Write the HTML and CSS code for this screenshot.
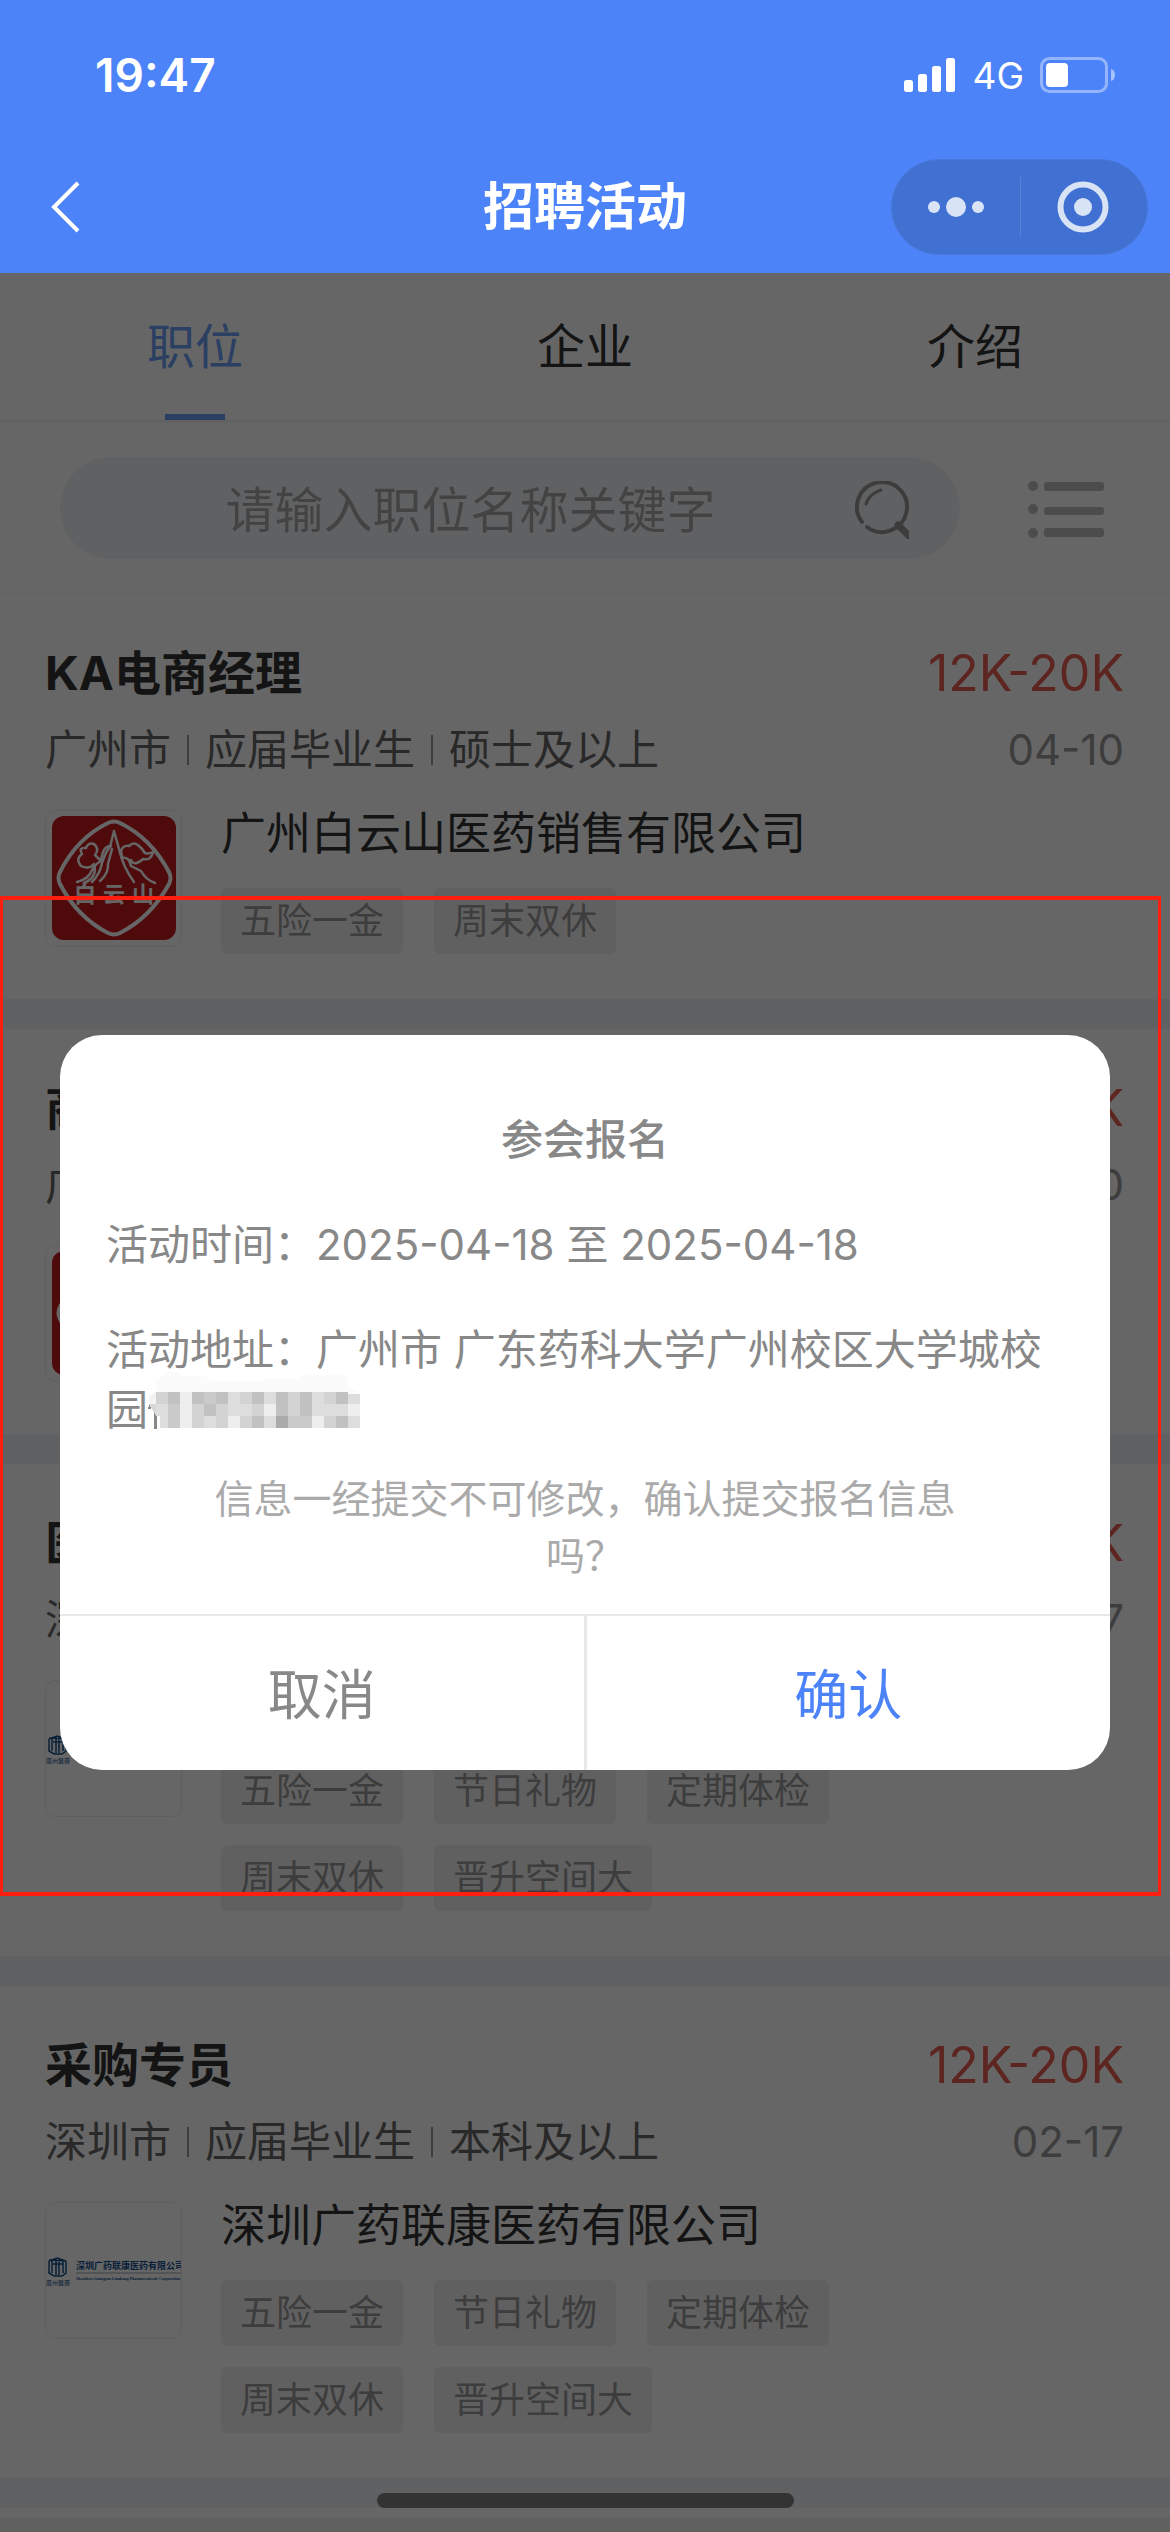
FILE: index.html
```
<!DOCTYPE html>
<html lang="zh-CN">
<head>
<meta charset="utf-8">
<meta name="viewport" content="width=device-width, initial-scale=1">
<title>招聘活动</title>
<link rel="stylesheet" href="styles.css">
</head>
<body>
<svg class="defs" width="0" height="0" aria-hidden="true">
  <symbol id="logo-bys" viewBox="0 0 135 135">
    <rect x="6" y="5" width="124" height="124" rx="12" fill="#c6191e"/>
    <g fill="none" stroke="#fff" stroke-linecap="round" stroke-linejoin="round">
      <path stroke-width="4" d="M62 12q6-3 12 0Q105 27 123 61q3 6 0 12-18 33-49 49-6 3-12 0Q31 106 14 73q-3-6 0-12Q31 27 62 12z"/>
      <path stroke-width="2.5" d="M46 71q8-8 10-19 4-12 8-16l4-16 5 18q4 18 15 33M76 47q7-2 9 8l10 5q5 9 14 12M54 70q9-8 8-17l4-15M31 71q12-3 15-12 5-8 10-9M38 72q14-6 10-19-5 6-13 2-6-7 1-12-4-7 4-6 2-6 8-4 6 5 1 11l6 6q2-16 10-15M76 46l-1-6q2-6 8-5 5-5 10 0l4 4q2 6 10 2-2 9-10 7-9 8-12 1"/>
    </g>
    <text x="39 68 97" y="91" text-anchor="middle" class="logo-bys-text">白云山</text>
  </symbol>
  <symbol id="logo-lk" viewBox="0 0 135 135">
    <g fill="none" stroke="#17508f" stroke-width="1.5">
      <path d="M3 58l8-3 9 3M3 58v12l5 3h8l4-3V58M6 58v12M17 58v12M7 61h10M10 55v17M13 55v17M3 57l17 1"/>
    </g>
    <text x="0" y="82" class="logo-lk-mark">廣州醫藥</text>
    <text x="30" y="66" class="logo-lk-name">深圳广药联康医药有限公司</text>
    <path d="M30 70h106" stroke="#9aa4b0" stroke-width="1"/>
    <text x="30" y="77" class="logo-lk-en">Shenzhen Guangyao Liankang Pharmaceuticals Corporation</text>
  </symbol>
</svg>

<header class="header">
  <div class="status">
    <span class="time">19:47</span>
    <div class="status-right">
      <svg width="52" height="34" viewBox="0 0 52 34" fill="#fff" aria-hidden="true"><rect y="22" width="9" height="12" rx="2.5"/><rect x="14" y="16" width="9" height="18" rx="2.5"/><rect x="28" y="8" width="9" height="26" rx="2.5"/><rect x="42" width="9" height="34" rx="2.5"/></svg>
      <span class="network">4G</span>
      <svg width="76" height="36" viewBox="0 0 76 36" aria-hidden="true"><rect x="1.500" y="1.500" width="65" height="33" rx="8" fill="none" stroke="#fff" stroke-opacity=".4" stroke-width="3"/><rect x="6" y="6" width="22" height="24" rx="4" fill="#fff"/><path d="M71 12q4 1 4 6t-4 6z" fill="#fff" fill-opacity=".5"/></svg>
    </div>
  </div>
  <div class="navbar">
    <button class="back" aria-label="返回"><svg width="30" height="52" viewBox="0 0 30 52" fill="none" stroke="#fff" stroke-width="4"><path d="M28 2L4 26l24 24"/></svg></button>
    <h1 class="title">招聘活动</h1>
    <div class="capsule">
      <button class="capsule-btn" aria-label="更多"><svg width="56" height="20" viewBox="0 0 56 20" fill="#d8e3f6"><circle cx="6" cy="10" r="6"/><circle cx="28" cy="10" r="10"/><circle cx="50" cy="10" r="6"/></svg></button>
      <button class="capsule-btn" aria-label="关闭"><svg width="52" height="52" viewBox="0 0 52 52"><circle cx="26" cy="26" r="22.500" fill="none" stroke="#d8e3f6" stroke-width="6"/><circle cx="26" cy="26" r="9" fill="#d8e3f6"/></svg></button>
    </div>
  </div>
</header>

<main class="page">
  <nav class="tabs">
    <a href="#jobs" class="tab active">职位</a>
    <a href="#companies" class="tab">企业</a>
    <a href="#intro" class="tab">介绍</a>
  </nav>
  <div class="search">
    <div class="search-box">
      <input class="search-input" type="text" placeholder="请输入职位名称关键字" aria-label="请输入职位名称关键字">
      <svg width="54" height="58" viewBox="0 0 54 58" fill="none" stroke="#969696" stroke-width="4" stroke-linecap="round" aria-hidden="true"><path d="M7 41A25 25 0 1 1 12 46"/><path d="M43 44l12 12" stroke-width="7"/><path d="M11 23q3-10 15-14" stroke-width="3"/></svg>
    </div>
    <button class="list-btn" aria-label="筛选"><svg width="76" height="58" viewBox="0 0 76 58" fill="#bebebe"><circle cx="5" cy="5" r="5"/><circle cx="5" cy="28" r="5"/><circle cx="5" cy="52" r="5"/><rect x="16" y="1" width="60" height="9" rx="3"/><rect x="16" y="26" width="60" height="8" rx="3"/><rect x="16" y="47" width="60" height="9" rx="3"/></svg></button>
  </div>

  <article class="job">
    <div class="row"><h2 class="job-title">KA电商经理</h2><span class="salary">12K-20K</span></div>
    <div class="row"><p class="meta"><span>广州市</span><span>应届毕业生</span><span>硕士及以上</span></p><time class="date">04-10</time></div>
    <div class="company">
      <svg class="logo" viewBox="0 0 135 135" aria-hidden="true"><use href="#logo-bys"/></svg>
      <div class="company-info">
        <h3 class="company-name">广州白云山医药销售有限公司</h3>
        <ul class="tags"><li>五险一金</li><li>周末双休</li></ul>
      </div>
    </div>
  </article>

  <article class="job">
    <div class="row"><h2 class="job-title">商务经理</h2><span class="salary">12K-20K</span></div>
    <div class="row"><p class="meta"><span>广州市</span><span>应届毕业生</span><span>硕士及以上</span></p><time class="date">04-10</time></div>
    <div class="company">
      <svg class="logo" viewBox="0 0 135 135" aria-hidden="true"><use href="#logo-bys"/></svg>
      <div class="company-info">
        <h3 class="company-name">广州白云山医药销售有限公司</h3>
        <ul class="tags"><li>五险一金</li><li>周末双休</li></ul>
      </div>
    </div>
  </article>

  <article class="job">
    <div class="row"><h2 class="job-title">医药专员</h2><span class="salary">12K-20K</span></div>
    <div class="row"><p class="meta"><span>深圳市</span><span>应届毕业生</span><span>本科及以上</span></p><time class="date">02-17</time></div>
    <div class="company">
      <svg class="logo" viewBox="0 0 135 135" aria-hidden="true"><use href="#logo-lk"/></svg>
      <div class="company-info">
        <h3 class="company-name">深圳广药联康医药有限公司</h3>
        <ul class="tags"><li>五险一金</li><li>节日礼物</li><li>定期体检</li><li>周末双休</li><li>晋升空间大</li></ul>
      </div>
    </div>
  </article>

  <article class="job">
    <div class="row"><h2 class="job-title">采购专员</h2><span class="salary">12K-20K</span></div>
    <div class="row"><p class="meta"><span>深圳市</span><span>应届毕业生</span><span>本科及以上</span></p><time class="date">02-17</time></div>
    <div class="company">
      <svg class="logo" viewBox="0 0 135 135" aria-hidden="true"><use href="#logo-lk"/></svg>
      <div class="company-info">
        <h3 class="company-name">深圳广药联康医药有限公司</h3>
        <ul class="tags"><li>五险一金</li><li>节日礼物</li><li>定期体检</li><li>周末双休</li><li>晋升空间大</li></ul>
      </div>
    </div>
  </article>
  <div class="list-end"></div>
</main>

<div class="mask">
  <section class="dialog" role="dialog" aria-modal="true" aria-labelledby="dialog-title">
    <div class="dialog-body">
      <h2 class="dialog-title" id="dialog-title">参会报名</h2>
      <p class="dialog-line">活动时间：2025-04-18 至 2025-04-18</p>
      <p class="dialog-line">活动地址：广州市 广东药科大学广州校区大学城校园<svg class="mosaic" width="212" height="60" viewBox="0 0 212 60" shape-rendering="crispEdges" aria-hidden="true">
        <path d="M1 29l3-5M7 25v24" stroke="#888" stroke-width="3"/>
        <path d="M8 12V0L20-8h12v4h24l12 5h48v-2h36v-4h48v12l12 5v36H12V48z" fill="#fbfbfb"/>
        <path d="M1 16l7-4v12H1z" fill="#f3f3f3"/><path d="M1 24h7v12z" fill="#d8d8d8"/>
        <g fill="#d3d3d3"><path d="M8 12h12v12H8zM80 12h12v12H80zM92 12h12v12H92zM140 12h12v12h-12zM176 12h12v12h-12zM44 24h12v12H44zM68 24h12v12H68zM104 24h12v12h-12zM140 24h12v12h-12zM44 36h12v12H44zM68 36h12v12H68zM92 36h12v12H92zM176 36h12v12h-12z"/></g>
        <g fill="#c1c1c1"><path d="M20 12h12v12H20zM44 12h36v12H44zM104 12h12v12h-12zM128 12h12v12h-12zM152 12h12v12h-12zM188 12h12v12h-12zM56 24h12v12H56zM128 24h12v12h-12zM152 24h12v12h-12zM104 36h12v12h-12zM188 36h12v12h-12z"/></g>
        <g fill="#cacaca"><path d="M20 24h12v24H20zM140 36h24v12h-24zM56 12h12v12H56z"/></g>
        <g fill="#dddddd"><path d="M8 24h12v12H8zM12 36h8v12h-8zM80 12h12v12H80zM116 12h12v12h-12zM164 12h12v12h-12zM200 14h12v10h-12zM80 24h24v12H80zM164 24h36v12h-36zM56 36h12v12H56zM116 36h12v12h-12zM200 36h12v12h-12z"/></g>
        <g fill="#eeeeee"><path d="M32 12h12v36H32zM116 24h12v12h-12zM200 24h12v12h-12zM80 36h12v12H80zM164 36h12v12h-12z"/></g>
        <path d="M128 36h12v12h-12z" fill="#ababab"/>
      </svg></p>
      <p class="dialog-note">信息一经提交不可修改，确认提交报名信息吗？</p>
    </div>
    <div class="dialog-actions">
      <button class="btn cancel">取消</button>
      <button class="btn confirm">确认</button>
    </div>
  </section>
</div>
<div class="highlight"></div>
<div class="home-indicator"></div>
</body>
</html>
```
FILE: styles.css
```
* { box-sizing: border-box; margin: 0; padding: 0; }
body {
  position: relative;
  font-family: Inter, "Noto Sans CJK SC", sans-serif;
  color: #333;
  background: #fff;
}
button { border: 0; background: none; font: inherit; color: inherit; }
a { color: inherit; text-decoration: none; }
ul { list-style: none; }
svg { display: block; flex: none; }
.defs { position: absolute; }

.header { height: 273px; color: #fff; background: #4d83f8; }
.status { display: flex; justify-content: space-between; height: 150px; padding: 0 54px 0 95px; align-items: center; }
.time { font-size: 46px; font-weight: 600; }
.status-right { display: flex; align-items: center; gap: 16px; }
.network { font-size: 37px; }
.navbar { display: grid; grid-template-columns: 1fr auto 1fr; align-items: center; height: 114px; padding: 0 22px; }
.back { justify-self: start; margin-left: 28px; }
.title { font-size: 51px; font-weight: 700; line-height: 60px; }
.capsule { justify-self: end; display: flex; width: 257px; height: 96px; border: 1px solid #4a78d8; border-radius: 48px; background: #4070d2; }
.capsule-btn { flex: 1; display: flex; align-items: center; justify-content: center; }
.capsule-btn + .capsule-btn { position: relative; }
.capsule-btn + .capsule-btn::before { content: ""; position: absolute; left: 0; top: 17px; width: 1px; height: 60px; background: #5781d6; }

.page { position: relative; }
.tabs { display: flex; height: 150px; border-bottom: 3px solid #f5f5f5; }
.tab { flex: 1; display: flex; flex-direction: column; align-items: center; font-size: 48px; line-height: 147px; }
.tab.active { color: #6a9df5; position: relative; }
.tab.active::after { content: ""; position: absolute; bottom: 0; width: 60px; height: 6px; background: #6a9df5; }

.search { display: flex; justify-content: space-between; align-items: center; height: 171px; padding: 0 66px 0 60px; border-bottom: 1px solid #f0f0f0; }
.search-box { display: flex; align-items: center; width: 900px; height: 102px; padding: 4px 51px 0 26px; border-radius: 51px; background: #f0f3f6; }
.search-input { flex: 1; min-width: 0; height: 100%; border: 0; background: none; font: inherit; font-size: 49px; text-align: center; }
.search-input::placeholder { color: #a9a9a9; }
.list-btn { padding-top: 4px; }

.job { padding: 45px 46px 45px 45px; border-bottom: 30px solid #f0f3f6; }
.row { display: flex; justify-content: space-between; align-items: center; }
.job-title { font-size: 47px; font-weight: 700; line-height: 68px; }
.salary { font-size: 50px; line-height: 68px; color: #e65c50; }
.meta { display: flex; font-size: 42px; line-height: 85px; color: #666; }
.meta span { display: flex; align-items: center; }
.meta span + span::before { content: ""; width: 2px; height: 30px; margin: 0 16px; background: #999; }
.date { font-size: 42px; line-height: 85px; color: #999; }
.company { display: flex; gap: 39px; }
.logo { width: 137px; height: 137px; margin-top: 18px; border: 1px solid #eee; border-radius: 10px; }
.logo-bys-text { font: 700 22px "Noto Sans CJK SC", sans-serif; fill: #fff; }
.logo-lk-mark { font: 6px "Noto Sans CJK SC", sans-serif; fill: #17508f; }
.logo-lk-name { font: 700 9px "Noto Sans CJK SC", sans-serif; fill: #17508f; }
.logo-lk-en { font: 700 4px "Liberation Serif", serif; fill: #17508f; }
.company-info { flex: 1; }
.company-name { font-size: 45px; font-weight: 400; line-height: 84px; }
.tags { display: flex; flex-wrap: wrap; gap: 21px 31px; max-width: 680px; padding-top: 12px; }
.tags li { padding: 0 19px; border-radius: 6px; background: #f0f0f0; color: #999; font-size: 36px; line-height: 66px; }
.list-end { height: 24px; border-bottom: 15px solid #f2f2f2; }

.mask { position: absolute; inset: 273px 0 0; padding: 762px 60px 0; background: rgba(0, 0, 0, .6); }
.dialog { border-radius: 42px; background: #fff; overflow: hidden; }
.dialog-body { padding: 75px 46px 30px; color: #888; }
.dialog-title { font-size: 42px; font-weight: 500; line-height: 60px; text-align: center; }
.dialog-line { margin-top: 45px; font-size: 42px; line-height: 60px; }
.mosaic { display: inline-block; vertical-align: bottom; overflow: visible; }
.dialog-note { margin-top: 30px; padding: 0 100px; font-size: 39px; line-height: 57px; text-align: center; color: #aaa; }
.dialog-actions { display: flex; height: 156px; border-top: 2px solid #e8e8e8; }
.btn { flex: 1; padding-bottom: 4px; font-size: 54px; color: #888; }
.cancel { border-right: 3px solid #e8e8e8; }
.confirm { color: #4d83f8; }

.highlight { position: absolute; left: 0; right: 9px; top: 896px; height: 1000px; border: 4px solid #ff1f10; border-width: 4px 3px; }
.home-indicator { position: absolute; left: 50%; bottom: 24px; width: 417px; height: 15px; margin-left: -208px; border-radius: 8px; background: #333; }
```
